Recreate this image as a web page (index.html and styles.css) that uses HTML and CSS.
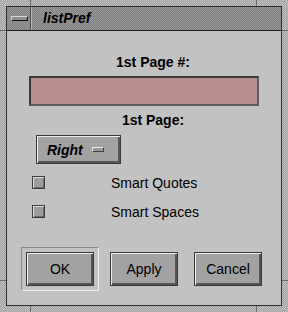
FILE: index.html
```html
<!DOCTYPE html>
<html>
<head>
  <link rel="stylesheet" href="styles.css">
</head>
<body>
  <div class="frame">
    <span class="notch notch_tl_h"></span>
    <span class="notch notch_tl_v"></span>
    <span class="notch notch_tr_h"></span>
    <span class="notch notch_tr_v"></span>
    <span class="notch notch_bl_h"></span>
    <span class="notch notch_bl_v"></span>
    <span class="notch notch_br_h"></span>
    <span class="notch notch_br_v"></span>

    <div class="inner">
      <div class="titlebar">
        <div class="menu_btn"><span class="menu_bar"></span></div>
        <div class="title">listPref</div>
      </div>

      <div class="client">
        <div class="label">1st Page #:</div>
        <div class="field"></div>
        <div class="label label_two">1st Page:</div>
        <div class="option">
          <span class="option_text">Right</span>
          <span class="option_mark"></span>
        </div>
        <div class="check_row">
          <span class="check"></span>
          <span class="check_text">Smart Quotes</span>
        </div>
        <div class="check_row check_row_two">
          <span class="check"></span>
          <span class="check_text">Smart Spaces</span>
        </div>
        <div class="buttons">
          <div class="default"><div class="btn">OK</div></div>
          <div class="btn">Apply</div>
          <div class="btn">Cancel</div>
        </div>
      </div>
    </div>
  </div>
</body>
</html>
```

FILE: styles.css
```css
body, html {
  margin: 0;
  font-family: "Liberation Sans", Arial, Helvetica, sans-serif;
}
.frame {
  position: relative;
  width: 288px;
  height: 312px;
  box-sizing: border-box;
  padding: 6px;
  background: repeating-conic-gradient(#9c9c9c 0 25%, #c6c6c6 0 50%) 0 0 / 2px 2px;
}
.notch {
  position: absolute;
  background: #6a6a6a;
}
.notch_tl_h, .notch_tr_h, .notch_bl_h, .notch_br_h {
  width: 6px;
  height: 1px;
}
.notch_tl_v, .notch_tr_v, .notch_bl_v, .notch_br_v {
  width: 1px;
  height: 6px;
}
.notch_tl_h { left: 0; top: 30px; }
.notch_tl_v { left: 30px; top: 0; }
.notch_tr_h { right: 0; top: 30px; }
.notch_tr_v { left: 256px; top: 0; }
.notch_bl_h { left: 0; top: 280px; }
.notch_bl_v { left: 30px; bottom: 0; }
.notch_br_h { right: 0; top: 280px; }
.notch_br_v { left: 256px; bottom: 0; }

.inner {
  height: 100%;
  box-sizing: border-box;
  border: 1px solid #2e2e2e;
  display: flex;
  flex-direction: column;
}
.titlebar {
  height: 23px;
  flex: none;
  display: flex;
  border-bottom: 1px solid #1e1e1e;
  background: repeating-conic-gradient(#828282 0 25%, #969696 0 50%) 0 0 / 2px 2px;
}
.menu_btn {
  width: 23px;
  border-right: 1px solid #505050;
  box-shadow: 1px 0 0 #b4b4b4;
  display: flex;
  align-items: center;
  justify-content: center;
}
.menu_bar {
  width: 15px;
  height: 3px;
  background: #8c8c8c;
  border: 1px solid #101010;
  border-top-color: #d8d8d8;
  border-left-color: #d8d8d8;
  margin-left: 1px;
}
.title {
  margin-left: 12px;
  font-size: 14px;
  font-weight: bold;
  font-style: italic;
  line-height: 22px;
  color: #000;
}

.client {
  flex: 1;
  background: #c2c2c2;
  padding-top: 23px;
}
.label {
  height: 16px;
  line-height: 16px;
  font-size: 14px;
  font-weight: bold;
  text-align: center;
  padding-left: 18px;
  color: #000;
}
.label_two {
  margin-top: 6px;
}
.field {
  margin: 6px 0 0 22px;
  width: 230px;
  height: 30px;
  box-sizing: border-box;
  background: #b98f8f;
  border: 2px solid;
  border-color: #3a3a3a #5c5c5c #5c5c5c #3a3a3a;
}
.option {
  margin: 7px 0 0 29px;
  width: 85px;
  height: 29px;
  box-sizing: border-box;
  display: flex;
  align-items: center;
  background: #a2a2a2;
  border: 1px solid #3a3a3a;
  box-shadow: inset 1px 1px 0 #ececec, inset -2px -2px 0 #565656;
}
.option_text {
  margin-left: 10px;
  font-size: 14px;
  font-weight: bold;
  font-style: italic;
  color: #000;
}
.option_mark {
  margin-left: 9px;
  width: 10px;
  height: 3px;
  background: #9a9a9a;
  border: 1px solid #404040;
  border-top-color: #e8e8e8;
  border-left-color: #e8e8e8;
}
.check_row {
  margin: 12px 0 0 25px;
  height: 13px;
  display: flex;
  align-items: center;
}
.check_row_two {
  margin-top: 16px;
}
.check {
  width: 13px;
  height: 13px;
  box-sizing: border-box;
  background: #9c9c9c;
  border: 1px solid #3c3c3c;
  box-shadow: inset 1px 1px 0 #e0e0e0, inset -1px -1px 0 #6a6a6a;
}
.check_text {
  margin-left: 66px;
  font-size: 14px;
  line-height: 16px;
  color: #000;
}
.buttons {
  margin: 34px 0 0 19px;
  display: flex;
  gap: 16px;
}
.default {
  margin: -5px;
  padding: 4px;
  border: 1px solid;
  border-color: #8a8a8a #eeeeee #eeeeee #8a8a8a;
}
.btn {
  width: 68px;
  height: 34px;
  box-sizing: border-box;
  display: flex;
  align-items: center;
  justify-content: center;
  background: #a2a2a2;
  border: 1px solid #3a3a3a;
  box-shadow: inset 1px 1px 0 #ececec, inset -2px -2px 0 #565656;
  font-size: 14px;
  color: #000;
}
```
